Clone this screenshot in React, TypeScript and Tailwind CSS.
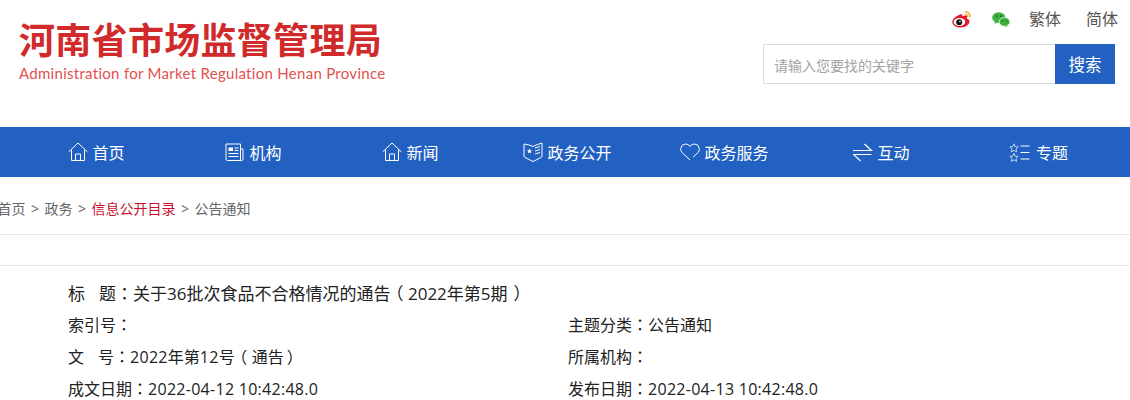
import { ReactNode } from "react";

const baseFont = "font-['Open_Sans','Noto_Sans_CJK_SC',sans-serif]";

function HomeIcon() {
  return (
    <svg width="20" height="20" viewBox="0 0 20 20" fill="none" stroke="white" strokeWidth="1">
      <path d="M0.7 9.8 L10 1 L19.3 9.8" />
      <path d="M3.5 8 V18.5 H16.5 V8" />
      <path d="M7.5 18.5 V12 H12.5 V18.5" />
    </svg>
  );
}

function OrgIcon() {
  return (
    <svg width="20" height="19" viewBox="0 0 20 19" fill="none" stroke="white" strokeWidth="1">
      <path d="M1 1 H15.5 V17.5 H2.5 Q1 17.5 1 16 Z" />
      <path d="M15.5 6 H18 V16 Q18 17.5 16.5 17.5 H14" />
      <rect x="3.5" y="4.5" width="4.5" height="3.5" fill="white" stroke="none" />
      <path d="M9.5 5 H13.5 M9.5 7.5 H13.5 M3.5 10.5 H13.5 M3.5 13.5 H13.5" />
    </svg>
  );
}

function BookIcon() {
  return (
    <svg width="20" height="20" viewBox="0 0 20 20" fill="none" stroke="white" strokeWidth="1">
      <path d="M1 2 Q6 2.5 10 4.5 Q14 2.5 19 1 V14 Q19 15 18 15.5 L10 19.5 L2 15.5 Q1 15 1 14 Z" />
      <path d="M6.5 6.5 L7.3 8.2 L9 8.4 L7.8 9.6 L8.1 11.3 L6.5 10.4 L4.9 11.3 L5.2 9.6 L4 8.4 L5.7 8.2 Z" fill="white" stroke="none" />
      <path d="M12 6 L17 4.5 M12 9 L17 7.5 M12 12 L17 10.5" />
    </svg>
  );
}

function HeartIcon() {
  return (
    <svg width="20" height="18" viewBox="0 0 20 18" fill="none" stroke="white" strokeWidth="1">
      <path d="M10 17 L2 9.5 Q0.5 8 0.7 5.5 Q1.2 1.3 5.5 1 Q8 1 10 3.3 Q12 1 14.5 1 Q18.8 1.3 19.3 5.5 Q19.5 8 18 9.5 L13 14.2" />
    </svg>
  );
}

function SwapIcon() {
  return (
    <svg width="20" height="19" viewBox="0 0 20 19" fill="none" stroke="white" strokeWidth="1.2">
      <path d="M0 7.5 H18.5 L11.5 1" />
      <path d="M18.5 11.5 H0.5 L7.5 18" />
    </svg>
  );
}

function TopicIcon() {
  const star = "M5 0.8 L6.2 3.6 L9.2 3.9 L7 5.9 L7.6 8.9 L5 7.4 L2.4 8.9 L3 5.9 L0.8 3.9 L3.8 3.6 Z";
  return (
    <svg width="23" height="19" viewBox="0 0 23 19" fill="none" stroke="white" strokeWidth="1">
      <path d={star} strokeOpacity="0.7" />
      <path d={star} transform="translate(0 9.5)" strokeOpacity="0.7" />
      <path d="M11.5 3 H20.5 M11.5 9.5 H20.5 M11.5 16 H20.5" />
    </svg>
  );
}

function WeiboIcon() {
  return (
    <svg width="20" height="18" viewBox="0 0 20 18">
      <path d="M8 4.5 C4 6 0.3 9 0.3 12 C0.3 15.5 4.5 17.5 8.5 17.5 C13.5 17.5 17.5 14.5 17.5 11.5 C17.5 9.7 16 9 14.8 8.7 C15.5 7 15.2 5.7 13.8 5.5 C12.5 5.3 10.5 6.2 10.3 6.3 C10.6 4.5 9.8 3.7 8 4.5 Z" fill="#e6162d" />
      <ellipse cx="7.5" cy="12" rx="5.8" ry="4" fill="white" />
      <circle cx="7.2" cy="12.2" r="3" fill="#111" />
      <circle cx="8" cy="11.6" r="0.8" fill="white" />
      <path d="M13 2 C15.8 1.6 18.5 3.8 18 7.2" fill="none" stroke="#f5a623" strokeWidth="1.5" />
      <path d="M13.2 4.6 C14.8 4.3 16 5.5 15.8 7" fill="none" stroke="#f5a623" strokeWidth="1.3" />
    </svg>
  );
}

function WechatIcon() {
  return (
    <svg width="18" height="15" viewBox="0 0 18 15">
      <ellipse cx="6.8" cy="5.6" rx="6.6" ry="5.3" fill="#3fb13f" />
      <path d="M3 9 L2.8 12 L6 10 Z" fill="#3fb13f" />
      <ellipse cx="12.5" cy="9.8" rx="5.4" ry="4.4" fill="#3fb13f" stroke="white" strokeWidth="0.7" />
      <path d="M14.5 13 L15.6 14.8 L12.5 14 Z" fill="#3fb13f" />
      <circle cx="4.6" cy="4.2" r="0.9" fill="#1d6b1d" />
      <circle cx="8.8" cy="4.2" r="0.9" fill="#1d6b1d" />
      <circle cx="10.6" cy="9" r="0.7" fill="#1d6b1d" />
      <circle cx="14.4" cy="9" r="0.7" fill="#1d6b1d" />
    </svg>
  );
}

// full-width punctuation sits centred in its box in the reference
function Colon() {
  return <span className="font-['Noto_Sans_CJK_TC',sans-serif]">：</span>;
}

function OpenParen() {
  return <span className="pr-[4.5px] pl-[4.5px] [font-feature-settings:'halt']">（</span>;
}

function CloseParen({ className }: { className: string }) {
  return <span className={`[font-feature-settings:'halt'] ${className}`}>）</span>;
}

function Num({ children }: { children: ReactNode }) {
  return <span className="tracking-[0.28px]">{children}</span>;
}

const navItems: { label: string; icon: ReactNode }[] = [
  { label: "首页", icon: <HomeIcon /> },
  { label: "机构", icon: <OrgIcon /> },
  { label: "新闻", icon: <HomeIcon /> },
  { label: "政务公开", icon: <BookIcon /> },
  { label: "政务服务", icon: <HeartIcon /> },
  { label: "互动", icon: <SwapIcon /> },
  { label: "专题", icon: <TopicIcon /> },
];

export default function App() {
  return (
    <div className={`h-[400px] w-[1130px] overflow-hidden bg-white text-[#222] ${baseFont}`}>
      <header className="flex h-[127px] justify-between pl-[19px] pr-[15px]">
        <div className="pt-[19px]">
          <h1 className="text-[36px] leading-[44px] font-bold tracking-[0.3px] text-[#d12a2a]">河南省市场监督管理局</h1>
          <p className="font-['Lato',sans-serif] text-[15px] leading-[20px] tracking-[0.29px] text-[#e2504f]">
            Administration for Market Regulation Henan Province
          </p>
        </div>
        <div className="flex flex-col items-end pt-[7px]">
          <div className="flex h-[24px] items-center text-[16px] text-[#555]">
            <WeiboIcon />
            <span className="ml-[20px]"><WechatIcon /></span>
            <span className="ml-[19px]">繁体</span>
            <span className="mr-[-3px] ml-[25px]">简体</span>
          </div>
          <div className="mt-[13px] flex h-[40px] w-[352px]">
            <div className="flex flex-1 items-center border border-r-0 border-[#dcdcdc] pt-[2px] pl-[10px] text-[14px] text-[#a3a3a3]">
              请输入您要找的关键字
            </div>
            <div className="flex w-[60px] items-center justify-center bg-[#2261c1] pt-[2px] text-[16.5px] text-white">搜索</div>
          </div>
        </div>
      </header>

      <nav className="grid h-[50px] grid-cols-[repeat(7,157px)] bg-[#2261c1] px-[18px] text-white">
        {navItems.map((item) => (
          <div key={item.label} className="flex items-center justify-center gap-[4px] text-[16px]">
            {item.icon}
            <span className="pt-px">{item.label}</span>
          </div>
        ))}
      </nav>

      <div className="ml-[-2.5px] flex h-[58px] items-center gap-[5.5px] border-b border-[#e8e8e8] pt-[6px] text-[14px] text-[#666]">
        <span>首页</span>
        <span>&gt;</span>
        <span>政务</span>
        <span>&gt;</span>
        <span className="text-[#c8102e]">信息公开目录</span>
        <span>&gt;</span>
        <span>公告通知</span>
      </div>

      <div className="mt-[30px] border-t border-[#e8e8e8] pt-[11px] pl-[68px] text-[16px] leading-[32px]">
        <div className="h-[31px] text-[17px]">
          标<span className="inline-block w-[14px]" />题<Colon />关于36批次食品不合格情况的通告<OpenParen />2022年第5期<CloseParen className="pl-[6px]" />
        </div>
        <div className="grid auto-rows-[32px] grid-cols-[500px_1fr]">
          <div>索引号<Colon /></div>
          <div>主题分类<Colon />公告通知</div>
          <div>
            文<span className="inline-block w-[14px]" />号<Colon /><Num>2022</Num>年第<Num>12</Num>号<OpenParen />通告<CloseParen className="pl-[3px]" />
          </div>
          <div>所属机构<Colon /></div>
          <div>成文日期<Colon /><Num>2022-04-12 10:42:48.0</Num></div>
          <div>发布日期<Colon /><Num>2022-04-13 10:42:48.0</Num></div>
        </div>
      </div>
    </div>
  );
}
